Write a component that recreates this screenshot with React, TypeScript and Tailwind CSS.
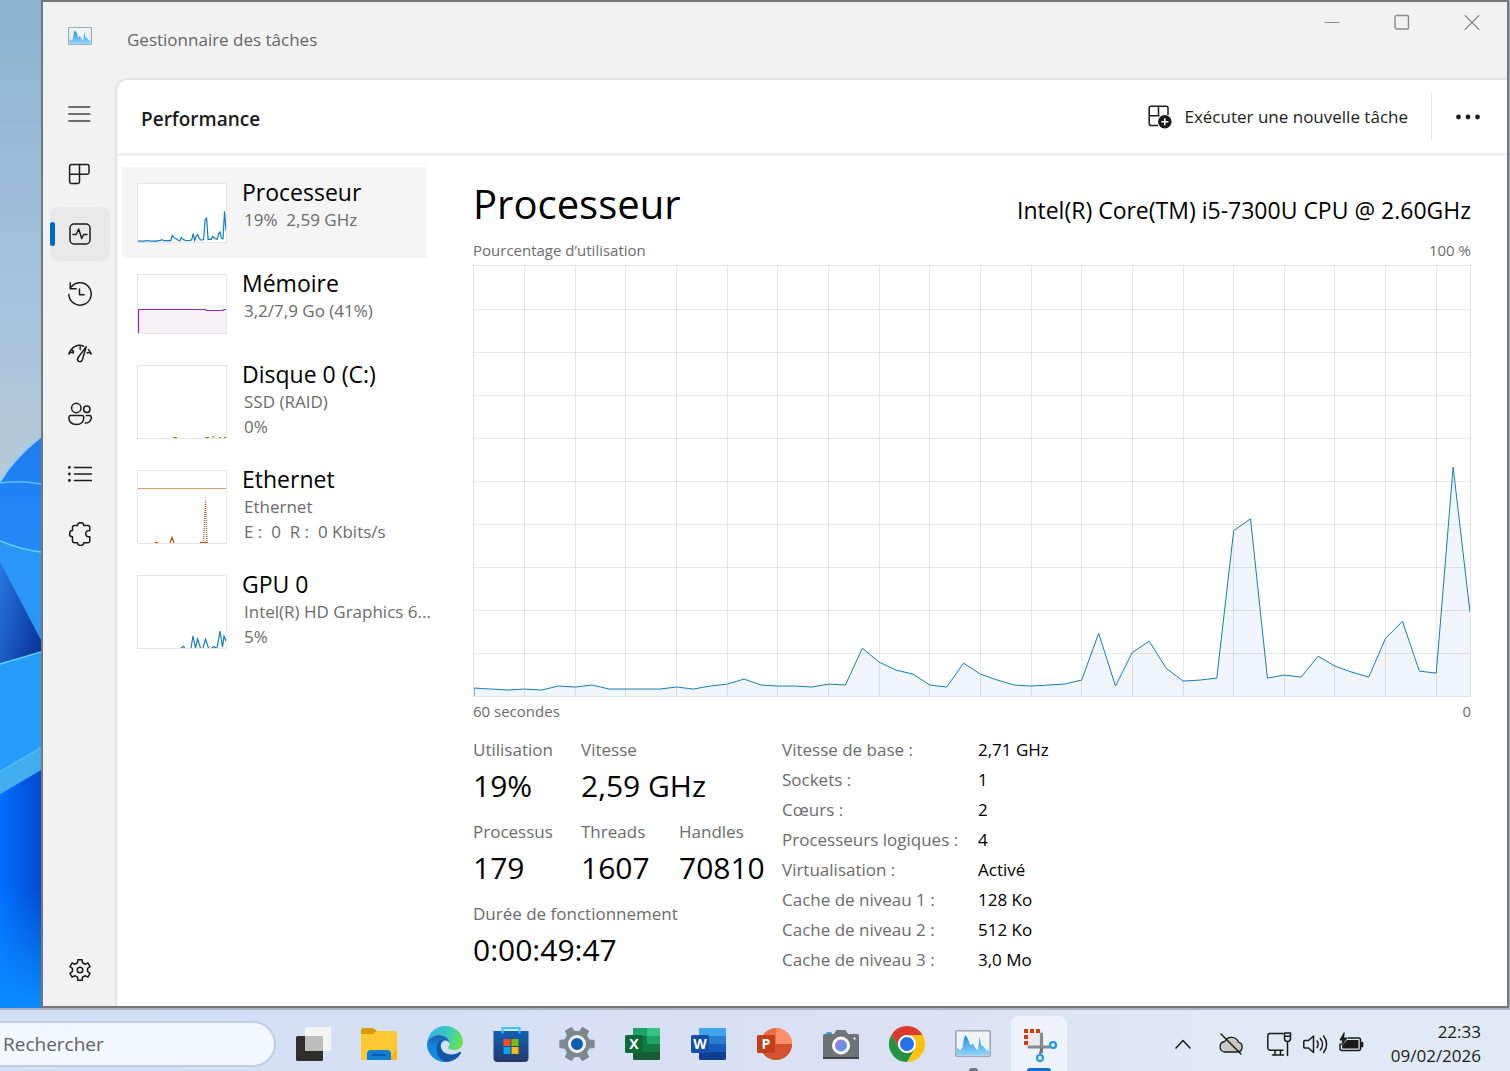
import type { ReactNode } from 'react';
import clsx from 'clsx';

const CPU_HISTORY = [
  8, 7, 6, 7, 6, 10, 9, 11, 7, 7, 7, 7, 9, 7, 10, 12, 17, 11, 10, 10, 9, 12, 11, 48, 34, 26, 22, 11, 9, 33,
  22, 16, 11, 10, 11, 12, 16, 63, 10, 44, 55, 28, 15, 16, 18, 166, 178, 18, 21, 19, 40, 30, 24, 19, 58, 75, 25, 23,
  230, 84,
];

const CHART_W = 998;
const CHART_H = 432;

function linePoints(values: number[], width: number, height: number, scale = 1) {
  const step = width / (values.length - 1);
  return values.map((v, i) => `${(i * step).toFixed(1)},${(height - v * scale).toFixed(1)}`).join(' ');
}

function gearPath(c: number, outer: number, inner: number, teeth: number) {
  const parts: string[] = [];
  const at = (r: number, a: number) => `${(c + r * Math.cos(a)).toFixed(2)} ${(c + r * Math.sin(a)).toFixed(2)}`;
  const slice = (Math.PI * 2) / teeth;
  for (let i = 0; i < teeth; i++) {
    const a = i * slice;
    parts.push(
      `${i ? 'L' : 'M'}${at(outer, a - slice * 0.2)}`,
      `L${at(outer, a + slice * 0.2)}`,
      `L${at(inner, a + slice * 0.3)}`,
      `Q${at(inner * 0.94, a + slice * 0.5)} ${at(inner, a + slice * 0.7)}`,
    );
  }
  return parts.join('') + 'Z';
}

/* ---------- navigation icons ---------- */

function NavIcon({ children }: { children: ReactNode }) {
  return (
    <svg
      viewBox="0 0 24 24"
      className="size-6"
      fill="none"
      stroke="#1b1b1b"
      strokeWidth="1.5"
      strokeLinecap="round"
      strokeLinejoin="round"
      aria-hidden="true"
    >
      {children}
    </svg>
  );
}

const navItems = [
  {
    label: 'Processus',
    icon: (
      <path d="M3.3 2.5h16a1.7 1.7 0 0 1 1.7 1.7v6.3a1.7 1.7 0 0 1-1.7 1.7h-7.8v7.6a1.7 1.7 0 0 1-1.7 1.7H3.3a1.7 1.7 0 0 1-1.7-1.7V4.2a1.7 1.7 0 0 1 1.7-1.7zM11.5 2.5v9.7M1.6 12.2h9.9" />
    ),
  },
  {
    label: 'Performance',
    icon: (
      <>
        <rect x="2" y="2" width="20" height="20" rx="4" />
        <path d="M5 12.5h3.2L10.7 7l3 9.5 2-4h3.3" />
      </>
    ),
  },
  {
    label: 'Historique des applications',
    icon: (
      <>
        <path d="M.8 12.5A11.2 11.2 0 1 0 3.2 5" />
        <path d="M2.2.8v6h6" />
        <path d="M11.5 7v5.8h4.6" />
      </>
    ),
  },
  {
    label: 'Applications de démarrage',
    icon: (
      <>
        <path d="M.8 12C3.5 4.500 10 1.800 15.500 4.300M20.300 7.500c1.300 1.200 2.200 2.700 2.900 4.500M.8 12c1.600-2 3-2.200 4.600-1M23.200 12c-1.200-1.400-2.600-1.800-4-1M12.200 3.800v3.600M3.600 7.300l1.800 2.200" />
        <path d="M18.200 4.600l-3.800 13.200c-.6 1.800-2.400 2.300-3.700 1.600-1.300-.8-1.500-2.300-.7-3.700z" />
      </>
    ),
  },
  {
    label: 'Utilisateurs',
    icon: (
      <>
        <circle cx="8.3" cy="6" r="4.7" />
        <circle cx="18.8" cy="7.3" r="3.2" />
        <path d="M2.8 13.4h11a2 2 0 0 1 2 2c0 4.4-3 7.2-7.5 7.2S.8 19.8.8 15.4a2 2 0 0 1 2-2z" />
        <path d="M18.300 13.400h3.200a1.800 1.800 0 0 1 1.800 1.800c0 3.600-2.200 6-6 5.800" />
      </>
    ),
  },
  {
    label: 'Détails',
    icon: (
      <>
        <path d="M6.500 5.500h17M6.500 12h17M6.500 18.500h17" />
        <path d="M1.400 5.500h.01M1.400 12h.01M1.400 18.500h.01" strokeWidth="2.800" />
      </>
    ),
  },
  {
    label: 'Services',
    icon: (
      <path d="M6.200 3.600h3.400C9.500 1.600 10.900.7 12.700.7s3.200.9 3.100 2.900h4.300a1.700 1.700 0 0 1 1.700 1.700v3.300c-2.600-.3-4.100 1.100-4.100 3.100s1.500 3.400 4.100 3.100v4.200a1.700 1.700 0 0 1-1.700 1.700h-4.300c0 1.900-1.300 2.700-3.100 2.700s-3.200-.8-3.200-2.700H6.200a1.700 1.700 0 0 1-1.700-1.700v-4.200c-2 0-2.900-1.300-2.900-3.100s.9-3.100 2.900-3.100V5.300a1.700 1.700 0 0 1 1.700-1.700z" />
    ),
  },
];

function NavButton({ label, active, children }: { label: string; active?: boolean; children: ReactNode }) {
  return (
    <button
      type="button"
      aria-label={label}
      className={clsx(
        'relative flex h-[54px] w-[60px] items-center justify-center rounded-lg',
        active ? 'bg-[#e9e9e9]' : 'hover:bg-[#ebebeb]',
      )}
    >
      {active && <span className="absolute left-0 h-6 w-[5px] rounded-full bg-[#0067c0]" />}
      <NavIcon>{children}</NavIcon>
    </button>
  );
}

/* ---------- sidebar thumbnails ---------- */

function Thumb({ tall, children }: { tall?: boolean; children: ReactNode }) {
  return (
    <svg
      viewBox={tall ? '0 0 88 72' : '0 0 88 58'}
      className={clsx('w-[90px] shrink-0 border border-[#e6e6e6] bg-white', tall ? 'h-[74px]' : 'h-[60px]')}
      fill="none"
      aria-hidden="true"
    >
      {children}
    </svg>
  );
}

const resources = [
  {
    name: 'Processeur',
    lines: ['19%\u00a0 2,59 GHz'],
    tall: false,
    chart: <polyline points={linePoints(CPU_HISTORY, 88, 58, 0.134)} stroke="#117dbb" strokeWidth="1.2" />,
  },
  {
    name: 'Mémoire',
    lines: ['3,2/7,9 Go (41%)'],
    tall: false,
    chart: (
      <>
        <path d="M0 58V34.500h88V58z" fill="#f4f2f4" />
        <path d="M.5 58V34.500H67l1.500 1H85l1-1h2" stroke="#9528b4" strokeWidth="1.200" />
      </>
    ),
  },
  {
    name: 'Disque 0 (C:)',
    lines: ['SSD (RAID)', '0%'],
    tall: true,
    chart: <path d="M35 71.500h4M67 71.500h4M74 71.500l1-1.500 1 1.500M81 71.500h2M86 71.500h2" stroke="#4da60c" />,
  },
  {
    name: 'Ethernet',
    lines: ['Ethernet', 'E :\u00a0 0\u00a0 R :\u00a0 0 Kbits/s'],
    tall: true,
    chart: (
      <>
        <path d="M0 17.500h88" stroke="#d9a066" />
        <path d="M17 71.500h3M32 72l2-5.500 2 5.500M62 71.500h8" stroke="#a74f01" strokeWidth="1.200" />
        <path d="M65.500 72L67.500 29.500l1.500 42.500" stroke="#c0501a" strokeWidth="1.200" strokeDasharray="1 1" />
      </>
    ),
  },
  {
    name: 'GPU 0',
    lines: ['Intel(R) HD Graphics 6...', '5%'],
    tall: true,
    chart: (
      <path
        d="M43 72l2-1.500 2 1.500M53 72l2-12 2.500 12 2-9 3 9M65 72l2.500-9 3 9M74 72l2-1.500 2 1.500M79 72l3-17 2.500 16 1.500-11 2 5"
        stroke="#117dbb"
        strokeWidth="1.200"
      />
    ),
  },
];

function ResourceList() {
  return (
    <div className="w-[305px] shrink-0">
      {resources.map((r, i) => (
        <button
          key={r.name}
          type="button"
          className={clsx('flex w-full items-start gap-[15px] px-[15px] pb-[15px] text-left', i === 0 && 'bg-[#f5f5f5]')}
        >
          <span className="pt-4">
            <Thumb tall={r.tall}>{r.chart}</Thumb>
          </span>
          <span className="-mb-4 block pt-2.5 whitespace-nowrap">
            <span className="block text-[23px] leading-[30px] text-black">{r.name}</span>
            {r.lines.map((line) => (
              <span key={line} className="block pl-0.5 text-[17px] leading-[25px] text-[#6b6b6b]">
                {line}
              </span>
            ))}
          </span>
        </button>
      ))}
    </div>
  );
}

/* ---------- main chart and figures ---------- */

function CpuChart() {
  const points = linePoints(CPU_HISTORY, CHART_W, CHART_H);
  const columns = Array.from({ length: 19 }, (_, i) => ((i + 1) * 3 * CHART_W) / 59);
  const rows = Array.from({ length: 9 }, (_, i) => ((i + 1) * CHART_H) / 10);
  return (
    <svg
      viewBox={`0 0 ${CHART_W} ${CHART_H}`}
      preserveAspectRatio="none"
      className="block h-[432px] w-full border border-[#e3e3e3]"
      role="img"
      aria-label="Pourcentage d’utilisation"
    >
      <polygon points={`0,${CHART_H} ${points} ${CHART_W},${CHART_H}`} fill="#f0f5f9" />
      <g stroke="#000000" strokeOpacity="0.09" shapeRendering="crispEdges">
        {columns.map((x) => (
          <line key={x} x1={x} x2={x} y1="0" y2={CHART_H} />
        ))}
        {rows.map((y) => (
          <line key={y} x1="0" x2={CHART_W} y1={y} y2={y} />
        ))}
      </g>
      <polyline points={`0,${CHART_H} ${points}`} fill="none" stroke="#117dbb" strokeWidth="1" />
    </svg>
  );
}

const figures = [
  { label: 'Utilisation', value: '19%', span: 'col-span-1' },
  { label: 'Vitesse', value: '2,59 GHz', span: 'col-span-2' },
  { label: 'Processus', value: '179', span: 'col-span-1' },
  { label: 'Threads', value: '1607', span: 'col-span-1' },
  { label: 'Handles', value: '70810', span: 'col-span-1' },
  { label: 'Durée de fonctionnement', value: '0:00:49:47', span: 'col-span-3' },
];

const details = [
  ['Vitesse de base :', '2,71 GHz'],
  ['Sockets :', '1'],
  ['Cœurs :', '2'],
  ['Processeurs logiques :', '4'],
  ['Virtualisation :', 'Activé'],
  ['Cache de niveau 1 :', '128 Ko'],
  ['Cache de niveau 2 :', '512 Ko'],
  ['Cache de niveau 3 :', '3,0 Mo'],
];

function CpuPanel() {
  return (
    <section className="min-w-0 flex-1 pt-5">
      <div className="flex items-baseline justify-between text-black">
        <h2 className="text-[40px] leading-[56px]">Processeur</h2>
        <p className="text-[23px] leading-[30px]">Intel(R) Core(TM) i5-7300U CPU @ 2.60GHz</p>
      </div>
      <div className="flex justify-between pt-1.5 pb-[3px] text-[15px] leading-[24px] text-[#6b6b6b]">
        <span>Pourcentage d’utilisation</span>
        <span>100 %</span>
      </div>
      <CpuChart />
      <div className="flex justify-between pt-0.5 text-[15px] leading-[24px] text-[#6b6b6b]">
        <span>60 secondes</span>
        <span>0</span>
      </div>
      <div className="flex pt-3 text-[17px] leading-[30px]">
        <dl className="grid grid-cols-[108px_98px_103px] content-start">
          {figures.map((f) => (
            <div key={f.label} className={clsx('h-[82px]', f.span)}>
              <dt className="text-[#6b6b6b]">{f.label}</dt>
              <dd className="text-[30px] leading-[42px] whitespace-nowrap text-black">{f.value}</dd>
            </div>
          ))}
        </dl>
        <dl className="grid grid-cols-[196px_auto] content-start">
          {details.map(([label, value]) => (
            <div key={label} className="contents">
              <dt className="text-[#6b6b6b]">{label}</dt>
              <dd className="text-black">{value}</dd>
            </div>
          ))}
        </dl>
      </div>
    </section>
  );
}

/* ---------- window ---------- */

function MonitorLogo({ className }: { className: string }) {
  return (
    <svg viewBox="0 0 36 27" className={className} preserveAspectRatio="none" aria-hidden="true">
      <defs>
        <linearGradient id="monitorFill" x1="0" y1="0" x2="0" y2="1">
          <stop offset="0" stopColor="#1c8fe0" />
          <stop offset="1" stopColor="#8fd3fa" />
        </linearGradient>
      </defs>
      <rect x=".8" y=".8" width="34.4" height="25.4" rx="1" fill="#eef3f6" stroke="#98a9b6" strokeWidth="1.6" />
      <path
        d="M2 18l3.500 2.500L7.500 17 9 8l1.500-3L13 9l2 6 3-1 3 5 2 1L24.500 7l1.500 8 3 2 2 3 3 1v4H2z"
        fill="url(#monitorFill)"
      />
    </svg>
  );
}

function TitleBar() {
  return (
    <header className="flex h-[76px] shrink-0 items-start">
      <div className="flex items-start gap-[35px] pt-[25px] pl-[25px]">
        <MonitorLogo className="h-[18px] w-6" />
        <h1 className="text-[17px] leading-[26px] text-[#666666]">Gestionnaire des tâches</h1>
      </div>
      <div className="ml-auto flex text-[#8a8a8a]">
        <button type="button" aria-label="Réduire" className="flex h-10 w-[70px] items-center justify-center">
          <svg viewBox="0 0 16 16" className="size-4" stroke="currentColor" aria-hidden="true">
            <path d="M.5 8.500h15" />
          </svg>
        </button>
        <button type="button" aria-label="Agrandir" className="flex h-10 w-[70px] items-center justify-center">
          <svg viewBox="0 0 16 16" className="size-4" stroke="currentColor" strokeWidth="1.4" fill="none" aria-hidden="true">
            <rect x="1" y="1.5" width="13.5" height="13.5" rx="1.5" />
          </svg>
        </button>
        <button type="button" aria-label="Fermer" className="flex h-10 w-[70px] items-center justify-center">
          <svg viewBox="0 0 16 16" className="size-4" stroke="currentColor" strokeWidth="1.3" aria-hidden="true">
            <path d="M.8 1.300l14.400 14.400M15.200 1.300L.8 15.700" />
          </svg>
        </button>
      </div>
    </header>
  );
}

function CommandBar() {
  return (
    <div className="flex h-[76px] items-center border-b-[3px] border-[#f0f0f0] pr-[3px] pl-6">
      <h2 className="pt-1 text-[19px] leading-[28px] font-semibold text-[#1b1b1b]">Performance</h2>
      <button type="button" className="ml-auto flex h-12 items-center gap-3 pr-[23px] text-[17px] text-[#1b1b1b]">
        <svg viewBox="0 0 24 24" className="size-6" fill="none" stroke="#1b1b1b" strokeWidth="1.5" aria-hidden="true">
          <path d="M10 20.500H3A1.800 1.800 0 0 1 1.200 18.700V3A1.800 1.800 0 0 1 3 1.200h15.200A1.800 1.800 0 0 1 20 3v7M10.500 1.200v9.500M1.200 10.700h10.300" />
          <circle cx="16.8" cy="16.8" r="6.8" fill="#1b1b1b" stroke="none" />
          <path d="M16.800 13.300v7M13.300 16.800h7" stroke="#ffffff" />
        </svg>
        Exécuter une nouvelle tâche
      </button>
      <span className="h-12 w-px bg-[#e8e8e8]" />
      <button type="button" aria-label="Voir plus" className="flex h-12 w-[72px] items-center justify-center">
        <svg viewBox="0 0 24 6" className="h-1.5 w-6" fill="#1b1b1b" aria-hidden="true">
          <circle cx="2.5" cy="3" r="2.4" />
          <circle cx="12" cy="3" r="2.4" />
          <circle cx="21.5" cy="3" r="2.4" />
        </svg>
      </button>
    </div>
  );
}

function TaskManager() {
  return (
    <div className="mr-px flex min-w-0 flex-1 flex-col border-2 border-[#777777] bg-[#f2f2f2]">
      <TitleBar />
      <div className="flex flex-1">
        <nav className="flex w-[72px] shrink-0 flex-col gap-1.5 py-[9px] pl-[7px]">
          <NavButton label="Ouvrir la navigation">
            <path d="M.8 5h21M.8 12h21M.8 19h21" stroke="#444444" />
          </NavButton>
          {navItems.map((item) => (
            <NavButton key={item.label} label={item.label} active={item.label === 'Performance'}>
              {item.icon}
            </NavButton>
          ))}
          <div className="mt-auto">
            <NavButton label="Paramètres">
              <path d={gearPath(12, 10.6, 7.8, 6)} transform="rotate(30 12 12)" />
              <circle cx="12" cy="12" r="2.8" />
            </NavButton>
          </div>
        </nav>
        <main className="min-w-0 flex-1 rounded-tl-xl border-t-2 border-l-2 border-[#e4e4e4] bg-white">
          <CommandBar />
          <div className="flex gap-[46px] pr-9 pl-[5px]">
            <div className="pt-[11px]">
              <ResourceList />
            </div>
            <CpuPanel />
          </div>
        </main>
      </div>
    </div>
  );
}

/* ---------- desktop ---------- */

function Wallpaper() {
  return (
    <svg viewBox="0 0 41 1008" preserveAspectRatio="none" className="absolute inset-0 size-full" aria-hidden="true">
      <defs>
        <linearGradient id="sky" x1="0" y1="0" x2="0" y2="1">
          <stop offset="0" stopColor="#8ab3d0" />
          <stop offset=".3" stopColor="#a8c3dc" />
          <stop offset=".45" stopColor="#b3c9d9" />
        </linearGradient>
        <linearGradient id="petal" x1="0" y1="0" x2="0" y2="1">
          <stop offset="0" stopColor="#1d7df0" />
          <stop offset="1" stopColor="#2f95ff" />
        </linearGradient>
        <linearGradient id="shade" x1="0" y1="0" x2="1" y2=".6">
          <stop offset="0" stopColor="#2a78e0" />
          <stop offset="1" stopColor="#0a3aa0" />
        </linearGradient>
        <linearGradient id="deep" x1="0" y1="0" x2="1" y2="0">
          <stop offset="0" stopColor="#0072ff" />
          <stop offset="1" stopColor="#0449cf" />
        </linearGradient>
        <linearGradient id="glow" x1="0" y1="0" x2="0" y2="1">
          <stop offset=".5" stopColor="#0a8cff" stopOpacity="0" />
          <stop offset="1" stopColor="#0a8cff" />
        </linearGradient>
      </defs>
      <path d="M0 0h41v1008H0z" fill="url(#sky)" />
      <path d="M41 437Q14 458 0 482v190h41z" fill="url(#petal)" />
      <path d="M41 437Q14 458 0 482" stroke="#8ecbf5" strokeWidth="1.5" fill="none" />
      <path d="M0 483Q20 480 41 484" stroke="#5cc0ff" strokeWidth="1.5" fill="none" />
      <path d="M0 541Q22 550 41 552v88L0 562z" fill="#2a96f5" />
      <path d="M0 541Q22 550 41 552" stroke="#5fd4ff" strokeWidth="1.5" fill="none" />
      <path d="M0 562l41 78v12L0 664z" fill="url(#shade)" />
      <path d="M0 664l41-12v96L0 772z" fill="#259cf8" />
      <path d="M0 664l41-12M0 772l41-24" stroke="#5fd0fa" strokeWidth="1.5" />
      <path d="M0 772l41-24v22L0 794z" fill="#41aef0" />
      <path d="M0 794l41-24v238H0z" fill="url(#deep)" />
      <path d="M0 794l41-24v238H0z" fill="url(#glow)" />
    </svg>
  );
}

function AppIcon({ children }: { children: ReactNode }) {
  return (
    <svg viewBox="0 0 36 36" className="size-9" fill="none" aria-hidden="true">
      {children}
    </svg>
  );
}

const apps: { label: string; icon: ReactNode; state?: 'open' | 'active' }[] = [
  {
    label: 'Vue des tâches',
    icon: (
      <AppIcon>
        <rect x="1" y="10" width="27" height="25" rx="1.5" fill="#2e2e2d" />
        <rect x="10" y="1" width="27" height="24" rx="1.5" fill="#f4f4f4" />
        <path d="M10 10h18v15H11.500a1.500 1.500 0 0 1-1.500-1.500z" fill="#bdbdbd" />
      </AppIcon>
    ),
  },
  {
    label: 'Explorateur de fichiers',
    icon: (
      <AppIcon>
        <path d="M0 4a2 2 0 0 1 2-2h10l4 3-3 4H0z" fill="#dc9a0b" />
        <path d="M0 8h12l4-3h18a2 2 0 0 1 2 2v27H0z" fill="#fdc933" />
        <path d="M28 34h8V22z" fill="#f6b61c" />
        <path d="M6 34V28a4 4 0 0 1 4-4h16a4 4 0 0 1 4 4v6z" fill="#0f7fd6" />
        <path d="M11 29h14" stroke="#0a559a" strokeWidth="1.5" />
      </AppIcon>
    ),
  },
  {
    label: 'Microsoft Edge',
    icon: (
      <AppIcon>
        <defs>
          <linearGradient id="edgeTop" x1="0" y1=".3" x2="1" y2=".6">
            <stop offset="0" stopColor="#2fb5ea" />
            <stop offset=".5" stopColor="#37c9c2" />
            <stop offset="1" stopColor="#6ce04a" />
          </linearGradient>
          <linearGradient id="edgeSide" x1="0" y1="0" x2="0" y2="1">
            <stop offset="0" stopColor="#1b63b0" />
            <stop offset=".4" stopColor="#0f86da" />
            <stop offset="1" stopColor="#1590df" />
          </linearGradient>
        </defs>
        <path d="M0 17C1 7 9 0 18 0c10 0 18 7 18 16 0 5-4 8-9 8-4 0-6-1-6-2.500 0-.7 1.500-1.500 1.500-3.500 0-5-4.500-9-10.500-9S2 12 0 17z" fill="url(#edgeTop)" />
        <path d="M0 18c1-5.500 6-9 12-9 6 0 10.500 4 10.500 8.500C20 12.500 15 14 13.500 19c-1.500 6 2 12 9.500 16-1.500.8-3 1-5 1C8 36 0 28 0 18z" fill="url(#edgeSide)" />
        <path d="M10 20c1-5 5-7.500 9-6.500-4 0-6 3.500-5 8 1.200 5.500 8 8 14 6.500 2-.5 3.500-1.200 5-2 1-.5 1.500.3 1 1C31 32.500 25.500 36 19 36 12 34.500 8.500 27 10 20z" fill="#1455a6" />
      </AppIcon>
    ),
  },
  {
    label: 'Microsoft Store',
    icon: (
      <AppIcon>
        <defs>
          <linearGradient id="store" x1="0" y1="0" x2="0" y2="1">
            <stop offset="0" stopColor="#0c62b4" />
            <stop offset="1" stopColor="#27396b" />
          </linearGradient>
        </defs>
        <path d="M.5 5h35v27a4 4 0 0 1-4 4h-27a4 4 0 0 1-4-4z" fill="url(#store)" />
        <path d="M9.500 7.500V2h17v5.500" stroke="#37c4f2" strokeWidth="2" />
        <path d="M10.500 13h7v7h-7z" fill="#f25022" />
        <path d="M18.500 13h7v7h-7z" fill="#7fba00" />
        <path d="M10.500 21h7v7h-7z" fill="#00a4ef" />
        <path d="M18.500 21h7v7h-7z" fill="#ffb900" />
      </AppIcon>
    ),
  },
  {
    label: 'Paramètres',
    icon: (
      <AppIcon>
        <path d={gearPath(18, 17.5, 13, 6)} fill="#7d878e" stroke="#7d878e" strokeLinejoin="round" />
        <circle cx="18" cy="18" r="7.5" fill="#0d5db3" stroke="#f0f2f4" strokeWidth="3" />
      </AppIcon>
    ),
  },
  {
    label: 'Excel',
    icon: (
      <AppIcon>
        <rect x="8" y="2" width="27" height="32" rx="1.5" fill="#185c37" />
        <path d="M8 2h14v9H8z" fill="#21a366" />
        <path d="M22 2h11.500A1.500 1.500 0 0 1 35 3.500V10H22z" fill="#33c481" />
        <path d="M22 10h13v8H22z" fill="#21a366" />
        <path d="M8 10h14v16H8zM22 18h13v8H22z" fill="#107c41" />
        <rect x="0" y="9" width="18" height="18" rx="1.5" fill="#0b6a36" />
        <text x="9" y="23" textAnchor="middle" fontFamily="Open Sans, sans-serif" fontWeight="700" fontSize="14" fill="#ffffff">X</text>
      </AppIcon>
    ),
  },
  {
    label: 'Word',
    icon: (
      <AppIcon>
        <rect x="8" y="2" width="27" height="32" rx="1.5" fill="#103f91" />
        <path d="M9.500 2h24A1.500 1.500 0 0 1 35 3.500V10H8V3.500A1.500 1.500 0 0 1 9.500 2z" fill="#41a5ee" />
        <path d="M8 10h27v8H8z" fill="#2b7cd3" />
        <path d="M8 18h27v8H8z" fill="#185abd" />
        <rect x="0" y="9" width="18" height="18" rx="1.5" fill="#164fa8" />
        <text x="9" y="23" textAnchor="middle" fontFamily="Open Sans, sans-serif" fontWeight="700" fontSize="14" fill="#ffffff">W</text>
      </AppIcon>
    ),
  },
  {
    label: 'PowerPoint',
    icon: (
      <AppIcon>
        <circle cx="19" cy="18" r="16" fill="#ed6c47" />
        <path d="M19 2a16 16 0 0 1 16 16H19z" fill="#ff8f6b" />
        <path d="M35 18a16 16 0 0 1-32 0z" fill="#d35230" />
        <rect x="0" y="9" width="18" height="18" rx="1.5" fill="#c43e1c" />
        <text x="9" y="23" textAnchor="middle" fontFamily="Open Sans, sans-serif" fontWeight="700" fontSize="14" fill="#ffffff">P</text>
      </AppIcon>
    ),
  },
  {
    label: 'Caméra',
    icon: (
      <AppIcon>
        <defs>
          <linearGradient id="lens" x1="0" y1="0" x2="1" y2="1">
            <stop offset="0" stopColor="#b86be0" />
            <stop offset="1" stopColor="#35a8f0" />
          </linearGradient>
        </defs>
        <path d="M3 8V7.500A1.500 1.500 0 0 1 4.500 6h3A1.500 1.500 0 0 1 9 7.500V8z" fill="#1fa5e5" />
        <path d="M0 9.500A1.500 1.500 0 0 1 1.500 8H11l2.500-4h9L25 8h9.500A1.500 1.500 0 0 1 36 9.500V33H0z" fill="#6d7377" />
        <path d="M0 31h36v2H0z" fill="#43474a" />
        <circle cx="18" cy="19.5" r="7.5" fill="url(#lens)" stroke="#ffffff" strokeWidth="3" />
        <path d="M31.500 11v3M30 12.500h3" stroke="#dddddd" />
      </AppIcon>
    ),
  },
  {
    label: 'Google Chrome',
    icon: (
      <AppIcon>
        <path d="M2.400 9A18 18 0 0 1 33.600 9H18a9 9 0 0 0-7.800 13.500z" fill="#db3a2e" />
        <path d="M33.600 9A18 18 0 0 1 18 36l7.800-13.500A9 9 0 0 0 25.800 13.500L18 9z" fill="#fdc112" />
        <path d="M18 36A18 18 0 0 1 2.400 9l7.800 13.500a9 9 0 0 0 15.600 0z" fill="#229342" />
        <circle cx="18" cy="18" r="8" fill="#2272ea" stroke="#ffffff" strokeWidth="2" />
      </AppIcon>
    ),
  },
  { label: 'Gestionnaire des tâches', icon: <MonitorLogo className="h-[27px] w-9" />, state: 'open' },
  {
    label: 'Outil Capture',
    icon: (
      <AppIcon>
        <rect x="4" y="4" width="17" height="17" fill="#ece9ee" />
        <path d="M3 3h4v4H3zM9 3h4v4H9zM15 3h4v4h-4zM3 9h4v4H3zM3 15h4v4H3z" fill="#d13a0a" />
        <path d="M20.500 8v18M8 21h20" stroke="#85898d" strokeWidth="3.2" strokeLinecap="round" />
        <path d="M21 22l-2 6" stroke="#6d7276" strokeWidth="2.5" />
        <circle cx="32" cy="19" r="3" stroke="#1b9ae4" strokeWidth="2.2" />
        <circle cx="19" cy="32" r="3" stroke="#1b9ae4" strokeWidth="2" />
      </AppIcon>
    ),
    state: 'active',
  },
];

function TrayIcon({ children }: { children: ReactNode }) {
  return (
    <svg
      viewBox="0 0 24 24"
      className="size-6 overflow-visible"
      fill="none"
      stroke="#1b1b1b"
      strokeWidth="1.5"
      strokeLinecap="round"
      strokeLinejoin="round"
      aria-hidden="true"
    >
      {children}
    </svg>
  );
}

function Taskbar() {
  return (
    <footer className="flex h-[63px] shrink-0 items-center border-t-2 border-[#aab5c2] bg-linear-to-r from-[#d2dff6] via-[#dae1f3] via-60% to-[#dfeaf5] to-80% pt-1.5">
      <input
        type="search"
        aria-label="Rechercher"
        placeholder="Rechercher"
        className="h-[46px] w-[276px] rounded-r-full border-2 border-l-0 border-[#c2cbe0] bg-[#f3f7fe] pl-[3px] text-[19px] text-[#5f6368] placeholder:text-[#5f6368]"
      />
      <div className="flex h-full gap-2.5 pl-[9px]">
        {apps.map((app) => (
          <button
            key={app.label}
            type="button"
            aria-label={app.label}
            className={clsx(
              'relative flex w-14 items-center justify-center rounded-t-lg',
              app.state === 'active' && 'bg-[#eef2fb]',
            )}
          >
            {app.icon}
            {app.state === 'active' && <span className="absolute bottom-0 h-[3px] w-6 rounded-t-full bg-[#0a74d6]" />}
            {app.state === 'open' && <span className="absolute bottom-0 h-[3px] w-[9px] rounded-t-full bg-[#73777f]" />}
          </button>
        ))}
      </div>
      <div className="ml-auto flex items-center pr-[29px]">
        <button type="button" aria-label="Icônes cachées" className="flex w-12 justify-center">
          <TrayIcon>
            <path d="M5 16l7-7.500 7 7.500" />
          </TrayIcon>
        </button>
        <button type="button" aria-label="OneDrive" className="flex w-12 justify-center">
          <TrayIcon>
            <path d="M5.500 20h12.800a5 5 0 0 0 1.200-9.800A7.500 7.500 0 0 0 5.800 9.500 5.300 5.300 0 0 0 5.500 20z" fill="#c9c8c6" strokeWidth="1.3" />
            <path d="M2 2l20 20" />
          </TrayIcon>
        </button>
        <button type="button" aria-label="Réseau, son et batterie" className="flex gap-3 px-3">
          <TrayIcon>
            <path d="M16 1.500H3A2.500 2.500 0 0 0 .8 4v12A2.500 2.500 0 0 0 3 18.300h13M8 18.500V23M13.500 18.500V23M5.500 23h11" />
            <path d="M17.500 1h6v5.500a3 3 0 0 1-6 0zM17.500 4.300h6M20.500 9.500V23.500" />
          </TrayIcon>
          <TrayIcon>
            <path d="M.8 9.500v5.500a1 1 0 0 0 1 1h3.700l5 4.500V4L5.500 8.500H1.800a1 1 0 0 0-1 1zM14 9c1.500 2 1.500 4.500 0 6.500M17.300 6.500c2.800 3.400 2.800 8 0 11.500M20.600 4c4 5 4 11.500 0 16.500" />
          </TrayIcon>
          <TrayIcon>
            <path d="M9 6h10.500a2 2 0 0 1 2 2v8.500a2 2 0 0 1-2 2H3a2 2 0 0 1-2-2V12" />
            <path d="M8 8h11.500v8.500H3.200V13z" fill="#1b1b1b" stroke="none" />
            <path d="M22.500 10.500v4h1v-4z" />
            <path d="M5 1L1 8h3L2.500 13 8 6H5z" fill="#1b1b1b" strokeWidth="1" />
          </TrayIcon>
        </button>
        <button type="button" className="w-[106px] text-right text-[17px] leading-[24px] text-[#1b1b1b]">
          <span className="block">22:33</span>
          <span className="block">09/02/2026</span>
        </button>
      </div>
    </footer>
  );
}

export default function App() {
  return (
    <div className="flex min-h-screen flex-col bg-[#8fb3d0] font-['Open_Sans','Noto_Sans',sans-serif]">
      <div className="flex flex-1">
        <div className="relative w-[41px] shrink-0">
          <Wallpaper />
        </div>
        <TaskManager />
      </div>
      <Taskbar />
    </div>
  );
}
